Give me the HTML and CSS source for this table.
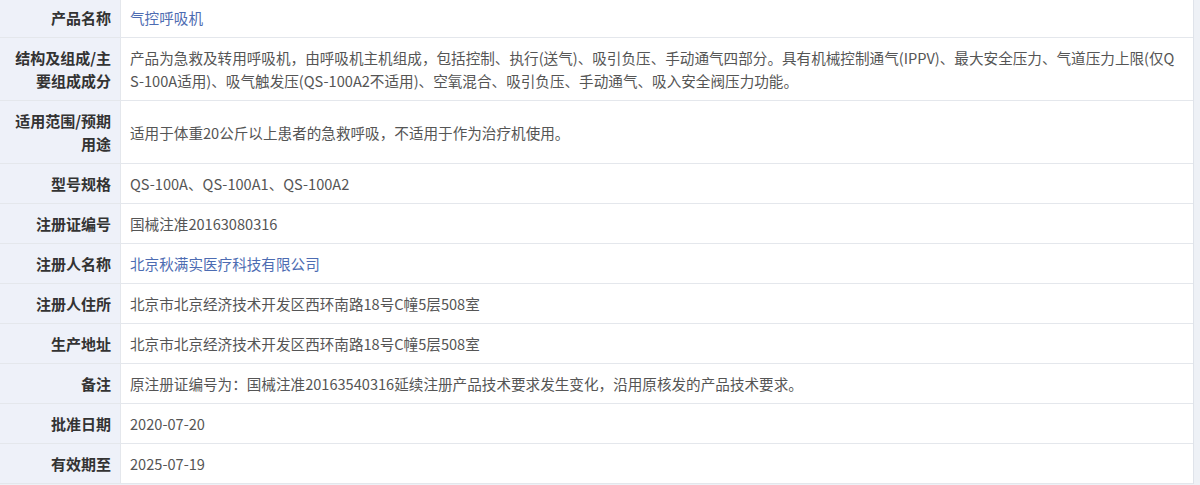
FILE: index.html
```html
<!DOCTYPE html>
<html>
  <head>
    <meta charset="utf-8">
    <title>医疗器械注册信息</title>
    <link rel="stylesheet" href="styles.css">
  </head>
  <body>
    <div class="page">
      <table class="info">
        <tr>
          <th>产品名称</th>
          <td><a href="#">气控呼吸机</a></td>
        </tr>
        <tr>
          <th>结构及组成/主要组成成分</th>
          <td>产品为急救及转用呼吸机，由呼吸机主机组成，包括控制、执行(送气)、吸引负压、手动通气四部分。具有机械控制通气(IPPV)、最大安全压力、气道压力上限(仅QS-100A适用)、吸气触发压(QS-100A2不适用)、空氧混合、吸引负压、手动通气、吸入安全阀压力功能。</td>
        </tr>
        <tr>
          <th>适用范围/预期用途</th>
          <td>适用于体重20公斤以上患者的急救呼吸，不适用于作为治疗机使用。</td>
        </tr>
        <tr>
          <th>型号规格</th>
          <td>QS-100A、QS-100A1、QS-100A2</td>
        </tr>
        <tr>
          <th>注册证编号</th>
          <td>国械注准20163080316</td>
        </tr>
        <tr>
          <th>注册人名称</th>
          <td><a href="#">北京秋满实医疗科技有限公司</a></td>
        </tr>
        <tr>
          <th>注册人住所</th>
          <td>北京市北京经济技术开发区西环南路18号C幢5层508室</td>
        </tr>
        <tr>
          <th>生产地址</th>
          <td>北京市北京经济技术开发区西环南路18号C幢5层508室</td>
        </tr>
        <tr>
          <th>备注</th>
          <td>原注册证编号为：国械注准20163540316延续注册产品技术要求发生变化，沿用原核发的产品技术要求。</td>
        </tr>
        <tr>
          <th>批准日期</th>
          <td>2020-07-20</td>
        </tr>
        <tr>
          <th>有效期至</th>
          <td>2025-07-19</td>
        </tr>
      </table>
    </div>
  </body>
</html>
```

FILE: styles.css
```css
body {
  margin: 0;
  background-color: #eef1f6;
  font-family: "Noto Sans CJK SC", "Noto Sans", sans-serif;
  font-size: 15px;
  color: #555;
}

.page {
  width: 1193px;
  margin-top: -2px;
  background-color: #fff;
  border-right: 1px solid #dfe3ea;
}

.info {
  width: 100%;
  border-collapse: collapse;
  table-layout: fixed;
}

.info th,
.info td {
  padding: 8px 9px 8px 9px;
  line-height: 23px;
  border-bottom: 1px solid #e4e7ec;
  vertical-align: middle;
}

.info th {
  width: 102px;
  background-color: #eef1f9;
  border-right: 1px solid #e4e7ec;
  text-align: right;
  font-weight: bold;
  color: #333;
}

.info td {
  padding-right: 14px;
  font-size: 14.6px;
  text-align: left;
  word-break: break-all;
}

.info a {
  color: #4d6cb2;
  text-decoration: none;
}
```
